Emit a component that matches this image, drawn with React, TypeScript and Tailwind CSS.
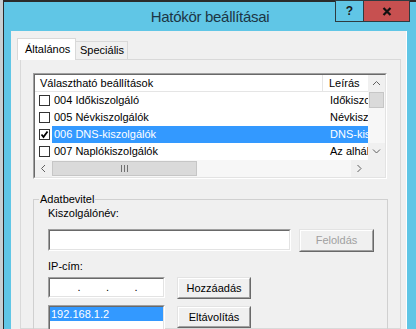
import React from "react";

const rows = [
  { name: "004 Időkiszolgáló", desc: "Időkiszolgáló", checked: false },
  { name: "005 Névkiszolgálók", desc: "Névkiszolgálók", checked: false },
  { name: "006 DNS-kiszolgálók", desc: "DNS-kiszolgálók", checked: true },
  { name: "007 Naplókiszolgálók", desc: "Az alhálózat", checked: false },
];

const Sunken = ({ className = "", children }: { className?: string; children?: React.ReactNode }) => (
  <div className={`border border-t-[#a0a0a0] border-l-[#a0a0a0] border-b-white border-r-white ${className}`}>
    <div className="h-full w-full overflow-hidden border border-t-[#696969] border-l-[#696969] border-b-[#e3e3e3] border-r-[#e3e3e3] bg-white">
      {children}
    </div>
  </div>
);

const Btn = ({ label, disabled = false, className = "" }: { label: string; disabled?: boolean; className?: string }) => (
  <div className={`border border-t-[#e3e3e3] border-l-[#e3e3e3] border-b-[#696969] border-r-[#696969] ${className}`}>
    <div
      className={`flex h-full items-center justify-center border border-t-white border-l-white border-b-[#a0a0a0] border-r-[#a0a0a0] bg-[#f0f0f0] ${
        disabled ? "text-[#a0a0a0]" : "text-black"
      }`}
    >
      {label}
    </div>
  </div>
);

const Chevron = ({ dir }: { dir: "up" | "down" | "left" | "right" }) => {
  const pts = {
    up: "1,5 4.5,1.5 8,5",
    down: "1,1.5 4.5,5 8,1.5",
    left: "5,1 1.5,4.5 5,8",
    right: "1.5,1 5,4.5 1.5,8",
  }[dir];
  const vertical = dir === "up" || dir === "down";
  return (
    <svg width={vertical ? 9 : 7} height={vertical ? 7 : 9} viewBox={vertical ? "0 0 9 7" : "0 0 7 9"}>
      <polyline points={pts} fill="none" stroke="#606060" strokeWidth="1" />
    </svg>
  );
};

const ScrollBtn = ({ dir }: { dir: "up" | "down" | "left" | "right" }) => (
  <div className="flex h-[17px] w-[17px] shrink-0 items-center justify-center bg-[#f0f0f0]">
    <Chevron dir={dir} />
  </div>
);

const CheckBox = ({ checked }: { checked: boolean }) => (
  <div className="flex h-[11px] w-[11px] items-center justify-center border border-[#333] bg-white">
    {checked && (
      <svg width="9" height="9" viewBox="0 0 9 9">
        <polyline points="1.5,4.5 3.5,7 7.5,1.5" fill="none" stroke="#000" strokeWidth="1.8" />
      </svg>
    )}
  </div>
);

const App = () => {
  return (
    <div className="flex h-[329px] w-[416px] overflow-hidden bg-[#c3cacd] font-['Liberation_Sans',Arial,sans-serif] text-[11px] leading-[13px] text-black">
      <div className="w-[3px] shrink-0 bg-[#c9cfd2]" />
      <div className="flex min-w-0 flex-1 flex-col border-l border-t-2 border-[#2b2b2b] bg-[#60c6e6]">
        {/* title bar */}
        <div className="grid h-[29px] shrink-0 grid-cols-[1fr_auto_1fr]">
          <div />
          <div className="self-center text-[15px] leading-[18px] tracking-[-0.3px] text-[#1c3544]">Hatókör beállításai</div>
          <div className="-mt-[2px] flex justify-end self-start pr-[6px]">
            <div className="flex h-[22px] w-[29px] items-center justify-center border border-[#2e3b40] bg-[#60c6e6] text-[12px] font-bold text-[#1a1a1a]">
              ?
            </div>
            <div className="flex h-[22px] w-[46px] items-center justify-center border border-l-0 border-[#2e3b40] bg-[#c75050]">
              <svg width="10" height="9" viewBox="0 0 10 9">
                <path d="M1.5 1 L8.5 8 M8.5 1 L1.5 8" stroke="#111" strokeWidth="2.2" />
              </svg>
            </div>
          </div>
        </div>

        {/* body */}
        <div className="flex min-h-0 flex-1 pl-[7px] pr-[9px]">
          <div className="flex min-w-0 flex-1 flex-col border-r border-white bg-[#f0f0f0] pl-[6px] pt-[7px]">
            <div className="flex h-[21px] shrink-0 items-end">
              <div className="relative z-10 -mb-px flex h-[22px] w-[59px] items-center border border-b-0 border-[#d9d9d9] bg-white pl-[7px]">
                Általános
              </div>
              <div className="flex h-[18px] w-[52px] items-center border border-b-0 border-l-0 border-[#d9d9d9] bg-[#f0f0f0] pl-[4px]">
                Speciális
              </div>
            </div>

            <div className="ml-[3px] mr-[5px] min-h-0 flex-1 border border-[#d9d9d9] bg-[#f0f0f0] pl-[12px] pt-[13px]">
              {/* list view */}
              <Sunken className="h-[106px] w-[354px]">
                <div className="flex h-full flex-col">
                  <div className="flex h-[85px]">
                    <div className="flex min-w-0 flex-1 flex-col">
                      <div className="flex h-[17px] shrink-0 border-b border-[#e5e5e5]">
                        <div className="flex w-[288px] items-center border-r border-[#e5e5e5] pl-[5px]">Választható beállítások</div>
                        <div className="flex items-center pl-[6px]">Leírás</div>
                      </div>
                      {rows.map((r, i) => (
                        <div key={i} className="flex h-[17px] shrink-0 items-center">
                          <div className="flex w-[17px] shrink-0 pl-[4px]">
                            <CheckBox checked={r.checked} />
                          </div>
                          <div
                            className={`flex h-full min-w-0 flex-1 items-center whitespace-nowrap ${
                              r.checked ? "bg-[#3399ff] text-white" : ""
                            }`}
                          >
                            <div className="w-[273px] shrink-0 pl-[2px]">{r.name}</div>
                            <div className="min-w-0 flex-1 overflow-hidden pl-[5px]">{r.desc}</div>
                          </div>
                        </div>
                      ))}
                    </div>
                    <div className="flex w-[17px] shrink-0 flex-col bg-[#f7f7f7]">
                      <ScrollBtn dir="up" />
                      <div className="mx-px h-[16px] border border-[#c6c6c6] bg-[#dadada]" />
                      <div className="flex-1" />
                      <ScrollBtn dir="down" />
                    </div>
                  </div>
                  <div className="flex h-[17px]">
                    <div className="flex min-w-0 flex-1 bg-[#f7f7f7]">
                      <ScrollBtn dir="left" />
                      <div className="my-px flex w-[145px] items-center justify-center gap-[2px] border border-[#c6c6c6] bg-[#dadada]">
                        <div className="h-[7px] w-px bg-[#707070]" />
                        <div className="h-[7px] w-px bg-[#707070]" />
                        <div className="h-[7px] w-px bg-[#707070]" />
                      </div>
                      <div className="flex-1" />
                      <ScrollBtn dir="right" />
                    </div>
                    <div className="w-[17px] bg-[#f0f0f0]" />
                  </div>
                </div>
              </Sunken>

              {/* group box */}
              <fieldset className="mt-[14px] w-[355px] border border-[#d0d0d0] p-0 pb-[30px]">
                <legend className="ml-[5px] px-px leading-[13px]">Adatbevitel</legend>
                <div className="pl-[14px] pt-px">
                  <div className="h-[13px]">Kiszolgálónév:</div>
                  <div className="mt-[9px] flex items-start">
                    <Sunken className="h-[22px] w-[243px]" />
                    <Btn label="Feloldás" disabled className="ml-[8px] h-[23px] w-[75px]" />
                  </div>
                  <div className="mt-[8px] h-[13px]">IP-cím:</div>
                  <div className="mt-[4px] flex items-start">
                    <div className="flex flex-col">
                      <Sunken className="h-[21px] w-[117px]">
                        <div className="flex h-full items-center pl-[2px]">
                          <div className="flex-1" />
                          <span>.</span>
                          <div className="flex-1" />
                          <span>.</span>
                          <div className="flex-1" />
                          <span>.</span>
                          <div className="flex-1" />
                        </div>
                      </Sunken>
                      <Sunken className="mt-[7px] h-[40px] w-[117px]">
                        <div className="flex h-[14px] items-center bg-[#3399ff] pl-px text-white">192.168.1.2</div>
                      </Sunken>
                    </div>
                    <div className="ml-[12px] flex flex-col">
                      <Btn label="Hozzáadás" className="h-[22px] w-[74px]" />
                      <Btn label="Eltávolítás" className="mt-[7px] h-[22px] w-[74px]" />
                    </div>
                  </div>
                </div>
              </fieldset>
            </div>
          </div>
        </div>
      </div>
    </div>
  );
};

export default App;
